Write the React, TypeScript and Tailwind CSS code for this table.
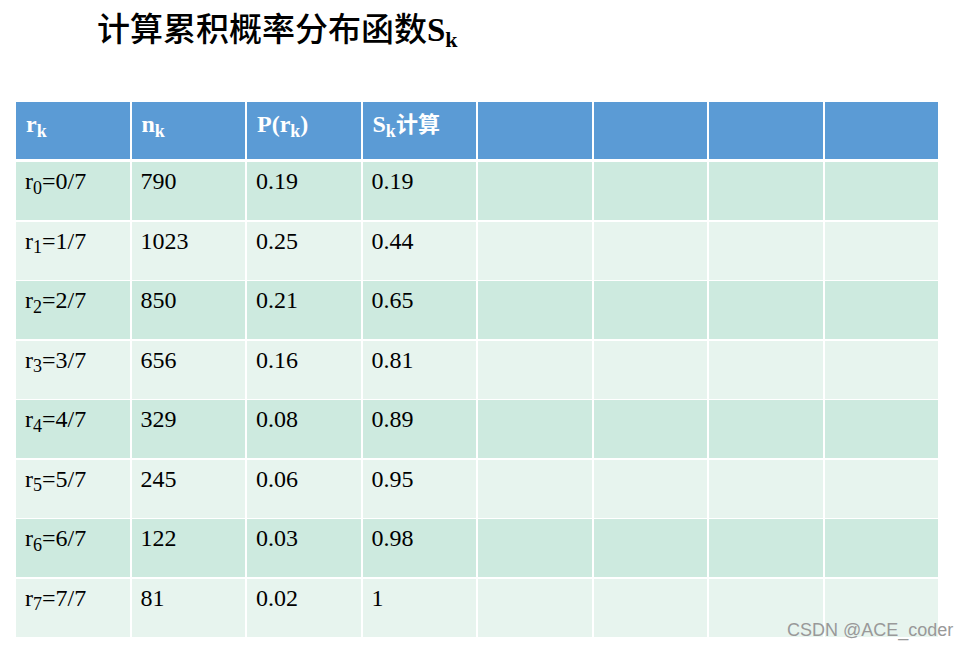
const serif = '"Liberation Serif", "Times New Roman", "Noto Sans CJK SC", serif';

type Row = { k: number; n: string; p: string; s: string };

const rows: Row[] = [
  { k: 0, n: '790', p: '0.19', s: '0.19' },
  { k: 1, n: '1023', p: '0.25', s: '0.44' },
  { k: 2, n: '850', p: '0.21', s: '0.65' },
  { k: 3, n: '656', p: '0.16', s: '0.81' },
  { k: 4, n: '329', p: '0.08', s: '0.89' },
  { k: 5, n: '245', p: '0.06', s: '0.95' },
  { k: 6, n: '122', p: '0.03', s: '0.98' },
  { k: 7, n: '81', p: '0.02', s: '1' },
];

function HeadCell({ children }: { children?: React.ReactNode }) {
  return (
    <div className="h-[57px] bg-[#5b9bd5] pl-[10px] pt-[8px] text-[24px] leading-[28px] font-bold text-white">
      {children}
    </div>
  );
}

function Cell({ children, odd }: { children?: React.ReactNode; odd: boolean }) {
  return (
    <div
      className={
        'h-[58px] pl-[9px] pt-[5px] text-[24px] leading-[28px] text-black ' +
        (odd ? 'bg-[#cdeadf]' : 'bg-[#e7f4ee]')
      }
    >
      {children}
    </div>
  );
}

export default function App() {
  return (
    <div className="relative w-[968px] h-[650px] bg-white overflow-hidden" style={{ fontFamily: serif }}>
      <h1 className="pl-[97px] pt-[10px] h-[102px] text-[33px] leading-[40px] text-black">
        <span className="font-medium">计算累积概率分布函数</span>
        <span className="font-bold">
          S<sub className="text-[22px]">k</sub>
        </span>
      </h1>

      <div className="ml-[16px] w-[922px] flex flex-col">
        <div className="grid grid-cols-8 gap-x-[2px] mb-[3px]">
          <HeadCell>
            r<sub>k</sub>
          </HeadCell>
          <HeadCell>
            n<sub>k</sub>
          </HeadCell>
          <HeadCell>
            P(r<sub>k</sub>)
          </HeadCell>
          <HeadCell>
            S<sub>k</sub>
            <span className="text-[22px]">计算</span>
          </HeadCell>
          <HeadCell />
          <HeadCell />
          <HeadCell />
          <HeadCell />
        </div>

        <div className="flex flex-col gap-y-[1.5px]">
          {rows.map((r, i) => {
            const odd = i % 2 === 0;
            return (
              <div key={r.k} className="grid grid-cols-8 gap-x-[2px]">
                <Cell odd={odd}>
                  r<sub>{r.k}</sub>={r.k}/7
                </Cell>
                <Cell odd={odd}>{r.n}</Cell>
                <Cell odd={odd}>{r.p}</Cell>
                <Cell odd={odd}>{r.s}</Cell>
                <Cell odd={odd} />
                <Cell odd={odd} />
                <Cell odd={odd} />
                <Cell odd={odd} />
              </div>
            );
          })}
        </div>
      </div>

      <div
        className="absolute left-[787px] top-[618px] text-[18px] leading-[24px] text-[#999999]"
        style={{ fontFamily: '"Liberation Sans", Arial, sans-serif' }}
      >
        CSDN @ACE_coder
      </div>
    </div>
  );
}
